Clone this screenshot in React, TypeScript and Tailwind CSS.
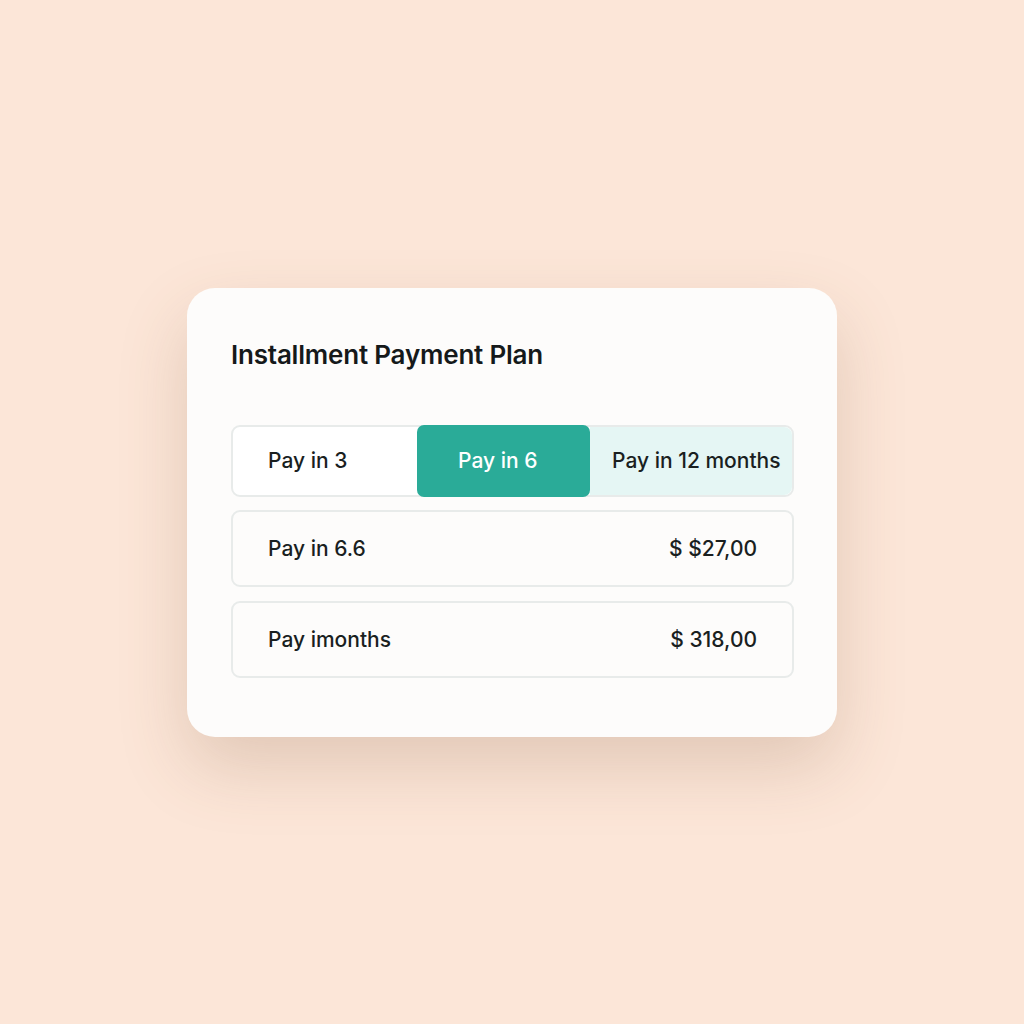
import React from "react";

export default function App() {
  const font = { fontFamily: "Inter, 'Liberation Sans', sans-serif" };
  return (
    <div className="w-[1024px] h-[1024px] bg-[#fce6d8] flex items-start justify-center" style={font}>
      <div className="mt-[288px] w-[650px] h-[449px] bg-[#fdfcfb] rounded-[28px] shadow-[0_30px_70px_rgba(120,80,50,0.2)] pl-[44px] pr-[43px] flex flex-col">
        <h1 className="mt-[51px] text-[26px] leading-[32px] font-semibold text-[#15191a] tracking-[-0.2px]">Installment Payment Plan</h1>
        <div className="mt-[54px] h-[72px] flex rounded-[9px] border-2 border-[#e8ebea] bg-white">
          <div className="w-[184px] flex items-center pl-[35px] text-[21px] font-medium text-[#1a1f1f]">Pay in 3</div>
          <div className="-my-[2px] w-[173px] flex items-center pl-[41px] rounded-[7px] bg-[#2aab98] text-[21px] font-medium text-white">Pay in 6</div>
          <div className="flex-1 flex items-center pl-[22px] rounded-r-[8px] bg-[#e5f6f4] text-[21px] font-medium text-[#1a1f1f]">Pay in 12 months</div>
        </div>
        <div className="mt-[13px] h-[77px] flex items-center justify-between rounded-[9px] border-2 border-[#e8ebea] pl-[35px] pr-[35px] text-[21px] font-medium text-[#1a1f1f]">
          <span>Pay in 6.6</span>
          <span>$ $27,00</span>
        </div>
        <div className="mt-[14px] h-[77px] flex items-center justify-between rounded-[9px] border-2 border-[#e8ebea] pl-[35px] pr-[35px] text-[21px] font-medium text-[#1a1f1f]">
          <span>Pay imonths</span>
          <span>$ 318,00</span>
        </div>
      </div>
    </div>
  );
}
